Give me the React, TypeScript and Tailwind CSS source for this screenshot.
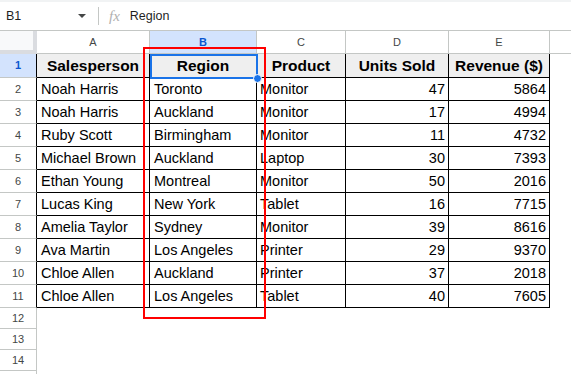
import React from 'react';

const cols = [
  { key: 'A', w: 'w-[113px]' },
  { key: 'B', w: 'w-[107px]' },
  { key: 'C', w: 'w-[89px]' },
  { key: 'D', w: 'w-[103px]' },
  { key: 'E', w: 'w-[101px]' },
];

const rows: [string, string, string, number, number][] = [
  ['Noah Harris', 'Toronto', 'Monitor', 47, 5864],
  ['Noah Harris', 'Auckland', 'Monitor', 17, 4994],
  ['Ruby Scott', 'Birmingham', 'Monitor', 11, 4732],
  ['Michael Brown', 'Auckland', 'Laptop', 30, 7393],
  ['Ethan Young', 'Montreal', 'Monitor', 50, 2016],
  ['Lucas King', 'New York', 'Tablet', 16, 7715],
  ['Amelia Taylor', 'Sydney', 'Monitor', 39, 8616],
  ['Ava Martin', 'Los Angeles', 'Printer', 29, 9370],
  ['Chloe Allen', 'Auckland', 'Printer', 37, 2018],
  ['Chloe Allen', 'Los Angeles', 'Tablet', 40, 7605],
];

const headers = ['Salesperson', 'Region', 'Product', 'Units Sold', 'Revenue ($)'];

function RowNum({ n, h, active, dark }: { n?: number; h: string; active?: boolean; dark?: boolean }) {
  return (
    <div
      className={`${h} w-[37px] shrink-0 flex items-center justify-center border-r border-b border-b-[#c4c7c5] text-[11px] ${
        dark ? 'border-r-black' : 'border-r-[#c4c7c5]'
      } ${active ? 'bg-[#d3e3fd] text-[#0b57d0] font-bold' : 'bg-white text-[#444746]'}`}
    >
      {n}
    </div>
  );
}

export default function App() {
  return (
    <div className="relative w-[571px] h-[374px] overflow-hidden bg-white" style={{ fontFamily: '"Liberation Sans", Arial, sans-serif' }}>
      {/* formula bar */}
      <div className="h-[31px] border-t-2 border-t-[#f1f3f4] border-b border-[#c4c7c5] flex items-center">
        <div className="w-[92px] pl-[6px] flex items-center justify-between pr-[6px] text-[12.5px] text-[#1f1f1f]">
          <span>B1</span>
          <span className="w-0 h-0 border-l-[4px] border-r-[4px] border-t-[4px] border-l-transparent border-r-transparent border-t-[#444746]" />
        </div>
        <div className="w-px h-[18px] bg-[#c4c7c5] ml-[6px]" />
        <span className="ml-[10px] text-[15px] italic text-[#b0b0b0]" style={{ fontFamily: '"Liberation Serif", serif' }}>
          fx
        </span>
        <span className="ml-[10px] text-[12.5px] text-[#1f1f1f]">Region</span>
      </div>

      {/* column headers */}
      <div className="flex h-[23px]">
        <div className="w-[37px] shrink-0 bg-[#f8f9fa] border-r-4 border-b-4 border-[#dadce0]" />
        {cols.map((c) => (
          <div
            key={c.key}
            className={`${c.w} shrink-0 flex items-center justify-center border-r border-b border-[#c4c7c5] text-[11px] ${
              c.key === 'B' ? 'bg-[#d3e3fd] text-[#0b57d0] font-bold' : 'text-[#444746]'
            }`}
          >
            {c.key}
          </div>
        ))}
        <div className="flex-1 border-b border-[#c4c7c5]" />
      </div>

      {/* row 1 */}
      <div className="flex h-[24px]">
        <RowNum n={1} h="h-[24px]" active dark />
        {headers.map((t, i) => (
          <div
            key={t}
            className={`${cols[i].w} shrink-0 bg-[#efefef] border-r border-b border-black flex items-center justify-center pt-px font-bold text-[15.5px] text-black`}
          >
            {t}
          </div>
        ))}
      </div>

      {/* data rows */}
      {rows.map((r, i) => (
        <div key={i} className="flex h-[23px]">
          <RowNum n={i + 2} h="h-[23px]" dark />
          <div className={`${cols[0].w} shrink-0 border-r border-b border-black flex items-center pt-px px-[4px] text-[14.5px] text-black whitespace-nowrap`}>{r[0]}</div>
          <div className={`${cols[1].w} shrink-0 border-r border-b border-black flex items-center pt-px px-[4px] text-[14.5px] text-black whitespace-nowrap`}>{r[1]}</div>
          <div className={`${cols[2].w} shrink-0 border-r border-b border-black flex items-center pt-px px-[3px] text-[14.5px] text-black whitespace-nowrap`}>{r[2]}</div>
          <div className={`${cols[3].w} shrink-0 border-r border-b border-black flex items-center justify-end pt-px px-[3px] text-[14.5px] text-black`}>{r[3]}</div>
          <div className={`${cols[4].w} shrink-0 border-r border-b border-black flex items-center justify-end pt-px px-[3px] text-[14.5px] text-black`}>{r[4]}</div>
        </div>
      ))}

      {/* empty rows */}
      {[12, 13, 14].map((n) => (
        <div key={n} className="flex h-[21px]">
          <RowNum n={n} h="h-[21px]" />
        </div>
      ))}
      <div className="flex h-[21px]">
        <RowNum h="h-[21px]" />
      </div>

      {/* selection on B1 */}
      <div className="absolute left-[150px] top-[54px] w-[108px] h-[25px] border-2 border-[#1a73e8]" />
      <div className="absolute left-[253px] top-[74px] w-[9px] h-[9px] rounded-full bg-[#1a73e8] border border-white" />

      {/* red highlight */}
      <div className="absolute left-[143px] top-[47px] w-[123px] h-[272px] border-2 border-[#ff0000]" />
    </div>
  );
}
